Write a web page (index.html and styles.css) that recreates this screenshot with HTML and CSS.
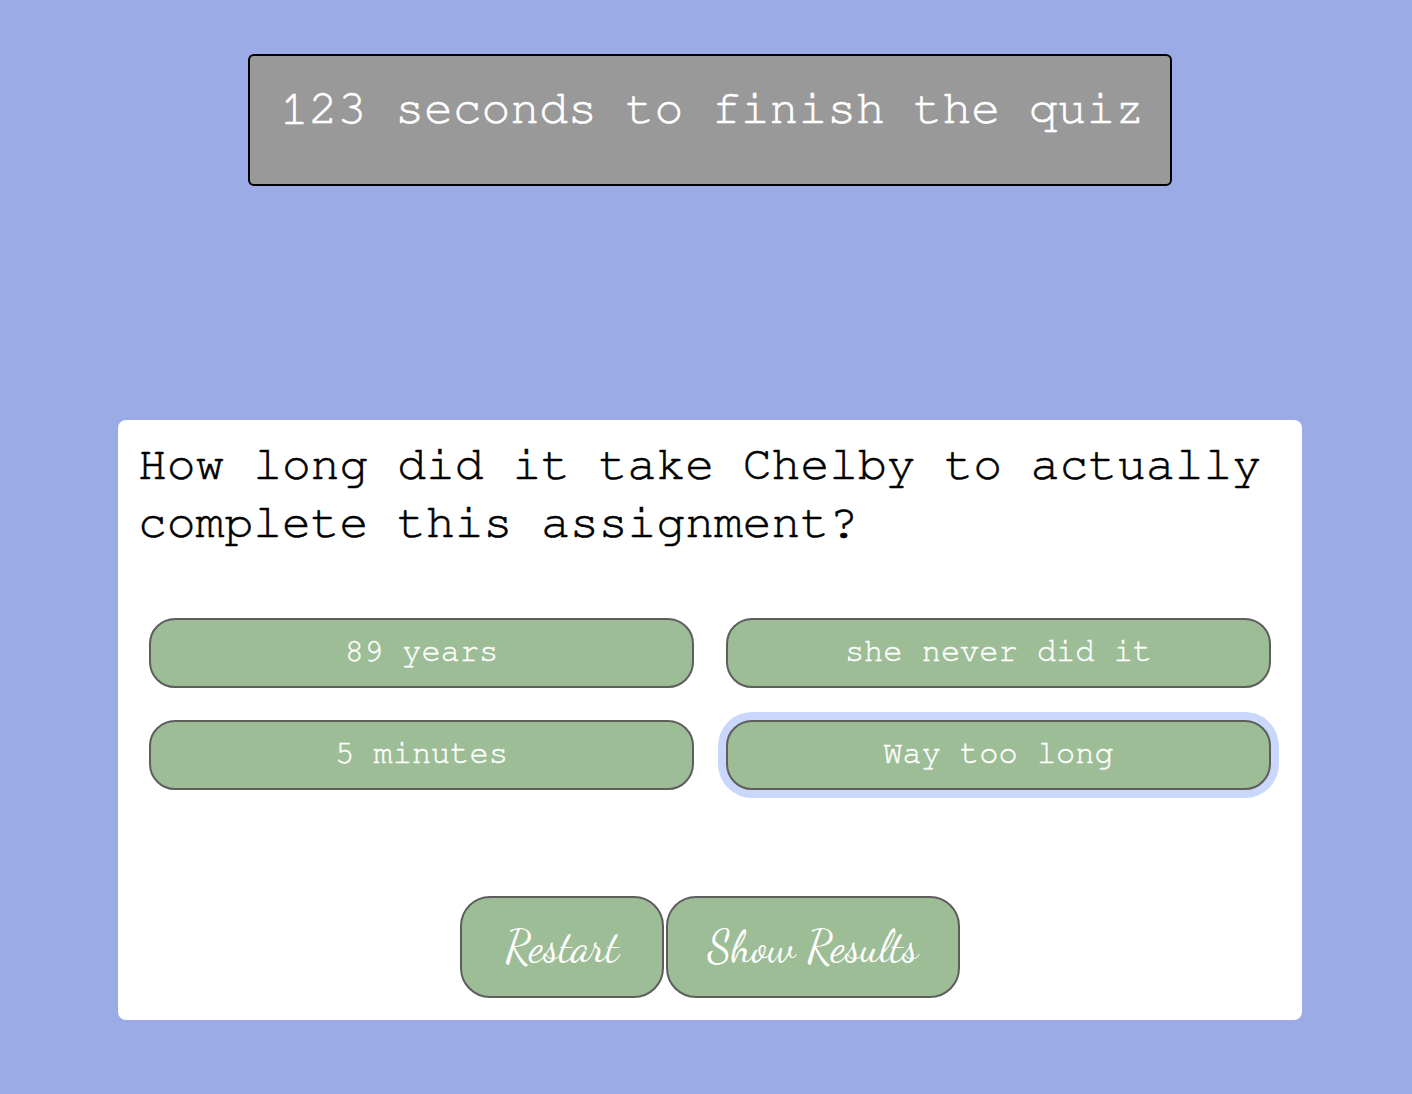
FILE: index.html
```html
<!DOCTYPE html>
<html>
<head>
<meta charset="utf-8">
<link rel="stylesheet" href="styles.css">
</head>
<body>
<main class="page">
  <div class="timer">123 seconds to finish the quiz</div>
  <section class="card">
    <h2 class="question">How long did it take Chelby to actually complete this assignment?</h2>
    <div class="answers">
      <button class="answer">89 years</button>
      <button class="answer">she never did it</button>
      <button class="answer">5 minutes</button>
      <button class="answer selected">Way too long</button>
    </div>
    <div class="controls">
      <button class="control restart">Restart</button>
      <button class="control results">Show Results</button>
    </div>
  </section>
</main>
</body>
</html>
```

FILE: styles.css
```css
html, body {
  margin: 0;
  padding: 0;
  background: #9aabe6;
}
body {
  padding-left: 8px;
}
.page {
  display: flex;
  flex-direction: column;
  align-items: center;
  padding-top: 54px;
}
.timer {
  width: 860px;
  height: 84px;
  padding: 26px 30px 18px;
  background: #999999;
  border: 2px solid #000;
  border-radius: 6px;
  color: #fff;
  font-family: "FreeMono", "Liberation Mono", monospace;
  font-size: 48px;
  line-height: 54px;
  white-space: nowrap;
  -webkit-text-stroke: 0.6px #fff;
}
.card {
  margin-top: 234px;
  width: 1144px;
  height: 563px;
  padding: 17px 20px 20px;
  background: #fff;
  border-radius: 8px;
  display: flex;
  flex-direction: column;
}
.question {
  margin: 0;
  font-family: "FreeMono", "Liberation Mono", monospace;
  font-weight: normal;
  font-size: 48px;
  line-height: 57.6px;
  color: #000;
  -webkit-text-stroke: 0.6px #000;
}
.answers {
  margin-top: 66px;
  padding: 0 11px;
  display: grid;
  grid-template-columns: 1fr 1fr;
  column-gap: 32px;
  row-gap: 32px;
}
.answer {
  height: 70px;
  background: #9dbd96;
  border: 2px solid #5e5e5e;
  border-radius: 26px;
  color: #fff;
  font-family: "FreeMono", "Liberation Mono", monospace;
  font-size: 32px;
  padding: 0 0 4px;
  -webkit-text-stroke: 0.4px #fff;
}
.answer.selected {
  box-shadow: 0 0 0 8px #c9d8fa;
}
.controls {
  margin-top: 106px;
  display: flex;
  justify-content: center;
  gap: 2px;
}
.control {
  height: 102px;
  padding: 0;
  background: #9dbd96;
  border: 2px solid #5e5e5e;
  border-radius: 30px;
  color: #fff;
  font-family: "Z003", "URW Chancery L", "Purisa", "Dancing Script", "Comic Neue", "Liberation Serif", cursive;
  font-size: 44px;
}
.restart {
  width: 204px;
}
.results {
  width: 294px;
}
```
